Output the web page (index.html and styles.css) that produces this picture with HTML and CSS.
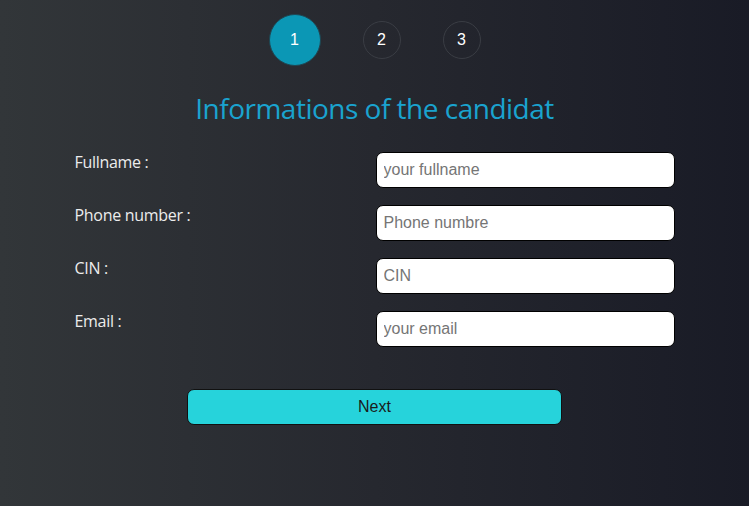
FILE: index.html
```html
<!DOCTYPE html>
<html lang="en">
<head>
<meta charset="utf-8">
<title>Candidate form</title>
<link rel="stylesheet" href="styles.css">
</head>
<body>
<main class="page">
  <div class="steps">
    <span class="step step-active">1</span>
    <span class="step">2</span>
    <span class="step">3</span>
  </div>
  <h1 class="title">Informations of the candidat</h1>
  <form class="form">
    <label class="label" for="fullname">Fullname :</label>
    <input class="field" id="fullname" type="text" placeholder="your fullname">
    <label class="label" for="phone">Phone number :</label>
    <input class="field" id="phone" type="text" placeholder="Phone numbre">
    <label class="label" for="cin">CIN :</label>
    <input class="field" id="cin" type="text" placeholder="CIN">
    <label class="label" for="email">Email :</label>
    <input class="field" id="email" type="text" placeholder="your email">
  </form>
  <div class="actions">
    <button class="next" type="button">Next</button>
  </div>
</main>
</body>
</html>
```

FILE: styles.css
```css
* { box-sizing: border-box; }
html, body { margin: 0; height: 100%; }
body {
  background: linear-gradient(to right, #323639 0%, #26282f 50%, #191b26 100%);
  font-family: "Open Sans", sans-serif;
}
.page {
  min-height: 506px;
  padding-top: 14px;
}
.steps {
  display: flex;
  justify-content: center;
  align-items: center;
  gap: 42px;
}
.step {
  width: 38px;
  height: 38px;
  border-radius: 50%;
  border: 1px solid #3a3d44;
  color: #ffffff;
  font-family: "Liberation Sans", Arial, sans-serif;
  font-size: 16px;
  display: flex;
  align-items: center;
  justify-content: center;
}
.step-active {
  width: 52px;
  height: 52px;
  background: #0b97b5;
  border: 1px solid #1f4652;
}
.title {
  margin: 23px 0 0;
  text-align: center;
  font-weight: 400;
  font-size: 28px;
  line-height: 38px;
  color: #1aa3cf;
  letter-spacing: -0.5px;
}
.form {
  width: 600px;
  margin: 25px auto 0;
  display: grid;
  grid-template-columns: 301px 299px;
  row-gap: 17px;
}
.label {
  color: #ececec;
  font-size: 16px;
  line-height: 20px;
  letter-spacing: -0.3px;
}
.field {
  height: 36px;
  width: 100%;
  border: 1px solid #000;
  border-radius: 7px;
  background: #fff;
  padding: 0 7px;
  font-family: "Liberation Sans", Arial, sans-serif;
  font-size: 16px;
  color: #222;
}
.field::placeholder { color: #757575; }
.actions {
  display: flex;
  justify-content: center;
  margin-top: 42px;
}
.next {
  width: 375px;
  height: 36px;
  background: #26d3db;
  border: 1px solid #111;
  border-radius: 7px;
  font-family: "Liberation Sans", Arial, sans-serif;
  font-size: 16px;
  color: #1a1a1a;
}
```
